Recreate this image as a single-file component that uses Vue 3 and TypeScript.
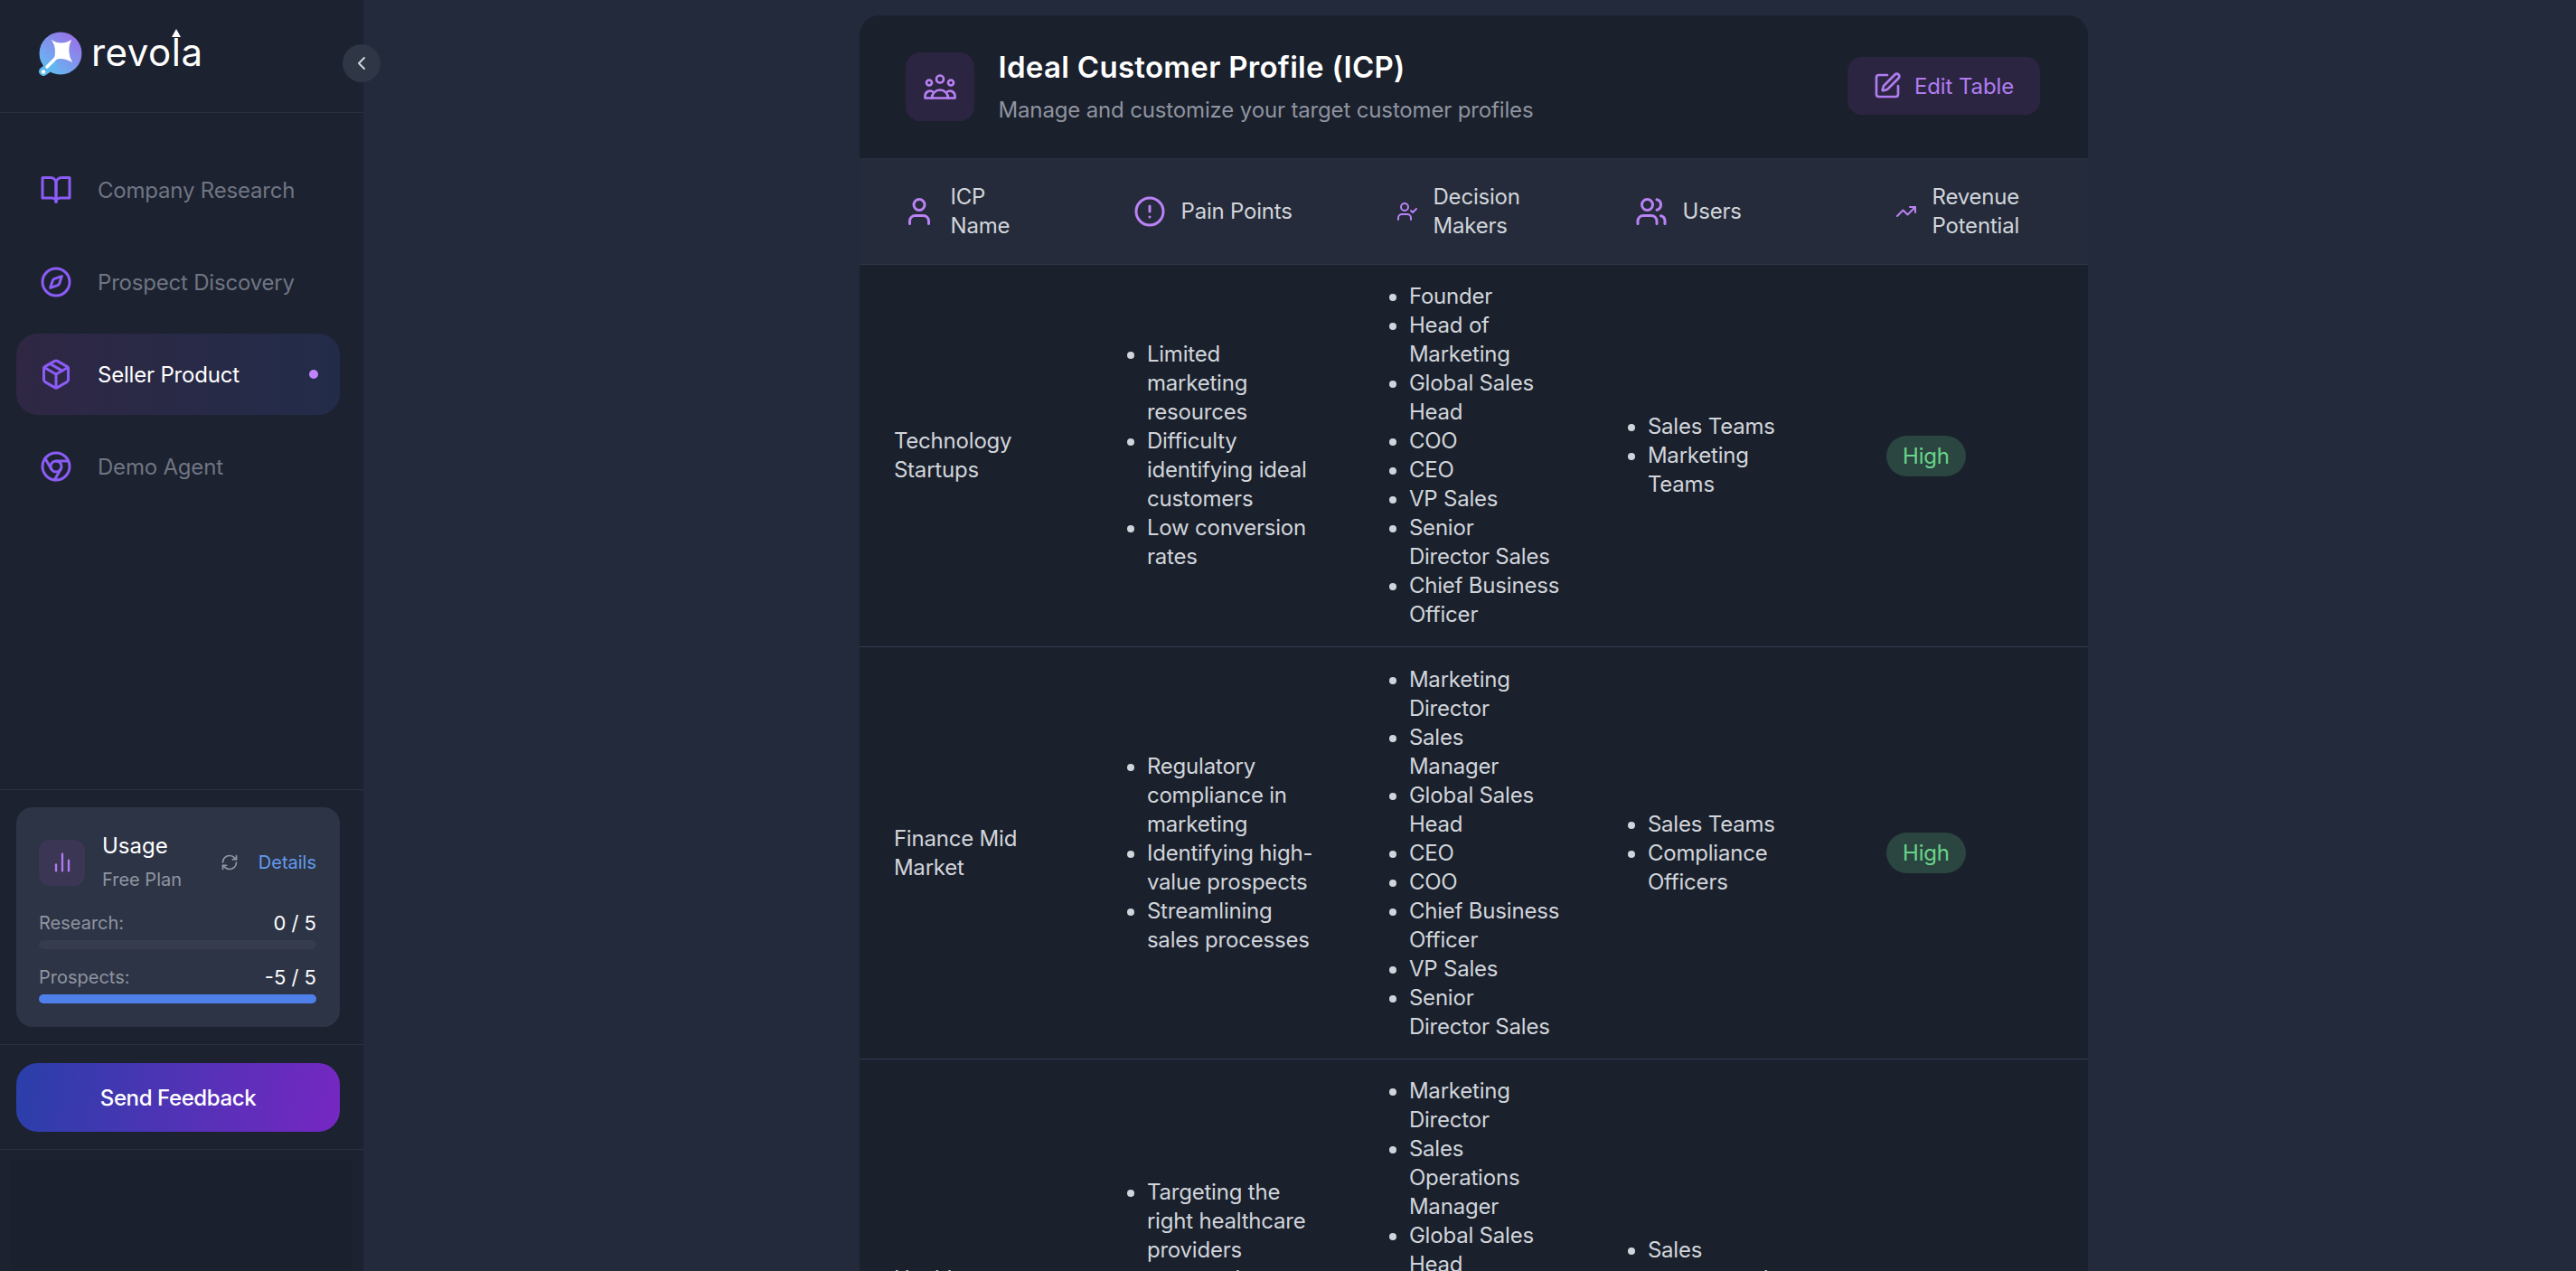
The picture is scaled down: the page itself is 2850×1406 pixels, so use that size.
<template>
  <div class="app">
    <aside class="sidebar">
      <div class="brand">
        <svg class="brand__mark" width="52" height="54" viewBox="0 0 52 54">
          <defs>
            <linearGradient id="bubble" x1="0.85" y1="0.05" x2="0.15" y2="0.95">
              <stop offset="0" stop-color="#9b6fe8" />
              <stop offset="1" stop-color="#62bdf2" />
            </linearGradient>
          </defs>
          <circle cx="27" cy="28" r="23.5" fill="url(#bubble)" />
          <path d="M18 41 8 48" stroke="#5fb9ef" stroke-width="10" stroke-linecap="round" />
          <circle cx="8" cy="48.500" r="2.200" fill="#fff" />
          <path d="M29 26 12 43" stroke="#fff" stroke-width="3.500" stroke-linecap="round" />
          <path d="M17 13Q27 20 39 13Q33 25 40 38Q28 31 19 36Q24 24 17 13Z" fill="#fff" />
        </svg>
        <span class="brand__name">revo<span class="brand__l">l</span>a</span>
      </div>
      <button class="collapse">
        <svg width="24" height="24" viewBox="0 0 24 24" fill="none" stroke="currentColor" stroke-width="2" stroke-linecap="round" stroke-linejoin="round"><path d="m15 18-6-6 6-6" /></svg>
      </button>

      <nav class="nav">
        <a v-for="item in navItems" :key="item.label" class="nav__item" :class="{ 'nav__item--active': item.active }">
          <svg class="nav__icon" viewBox="0 0 24 24" v-html="icons[item.icon]"></svg>
          <span>{{ item.label }}</span>
          <i v-if="item.active" class="nav__dot"></i>
        </a>
      </nav>

      <section class="usage-wrap">
        <div class="usage">
          <div class="usage__head">
            <div class="usage__icon">
              <svg width="28" height="28" viewBox="0 0 24 24" v-html="icons.bars"></svg>
            </div>
            <div class="usage__title">
              <strong>Usage</strong>
              <span>Free Plan</span>
            </div>
            <svg class="usage__refresh" width="20" height="20" viewBox="0 0 24 24" v-html="icons.refresh"></svg>
            <a class="usage__details">Details</a>
          </div>
          <div v-for="row in usage" :key="row.label" class="usage__row">
            <div class="usage__line">
              <span>{{ row.label }}</span>
              <b>{{ row.value }}</b>
            </div>
            <div class="usage__bar">
              <div class="usage__fill" :style="{ width: row.percent + '%' }"></div>
            </div>
          </div>
        </div>
      </section>

      <section class="feedback-wrap">
        <button class="feedback">Send Feedback</button>
      </section>

      <div class="side-foot"><div class="side-foot__box"></div></div>
    </aside>

    <main class="main">
      <div class="card">
        <header class="card__head">
          <div class="card__icon">
            <svg width="36" height="28" viewBox="0 0 36 28" fill="none" stroke="#b982f5" stroke-width="2.600" stroke-linejoin="round" stroke-linecap="round">
              <circle cx="18" cy="5.500" r="4" />
              <circle cx="6" cy="9.500" r="3" />
              <circle cx="30" cy="9.500" r="3" />
              <path d="M9 26.500a9 9 0 0 1 18 0z" />
              <path d="M9 26.500H1.500v-2.500a5.500 5.500 0 0 1 8.500-4.500" />
              <path d="M27 26.500h7.500v-2.500a5.500 5.500 0 0 0-8.500-4.500" />
            </svg>
          </div>
          <div class="card__titles">
            <h1>Ideal Customer Profile (ICP)</h1>
            <p>Manage and customize your target customer profiles</p>
          </div>
          <button class="edit">
            <svg width="32" height="32" viewBox="0 0 24 24" v-html="icons.edit"></svg>
            Edit Table
          </button>
        </header>

        <table class="icp">
          <colgroup>
            <col class="c1" /><col class="c2" /><col class="c3" /><col class="c4" /><col class="c5" />
          </colgroup>
          <thead>
            <tr>
              <th v-for="col in columns" :key="col.label">
                <div class="th">
                  <svg :width="col.size" :height="col.size" viewBox="0 0 24 24" v-html="icons[col.icon]"></svg>
                  <span>{{ col.label }}</span>
                </div>
              </th>
            </tr>
          </thead>
          <tbody>
            <tr v-for="row in rows" :key="row.name">
              <td class="name">{{ row.name }}</td>
              <td><ul><li v-for="p in row.pains" :key="p">{{ p }}</li></ul></td>
              <td><ul><li v-for="d in row.makers" :key="d">{{ d }}</li></ul></td>
              <td><ul><li v-for="u in row.users" :key="u">{{ u }}</li></ul></td>
              <td><span class="badge">{{ row.revenue }}</span></td>
            </tr>
          </tbody>
        </table>
      </div>
    </main>
  </div>
</template>

<script setup lang="ts">
const stroke = 'fill="none" stroke="currentColor" stroke-width="2" stroke-linecap="round" stroke-linejoin="round"'

const icons: Record<string, string> = {
  book: `<g ${stroke}><path d="M2 3h6a4 4 0 0 1 4 4v14a3 3 0 0 0-3-3H2z"/><path d="M22 3h-6a4 4 0 0 0-4 4v14a3 3 0 0 1 3-3h7z"/></g>`,
  compass: `<g ${stroke}><circle cx="12" cy="12" r="10"/><path d="m16.24 7.76-1.804 5.411a2 2 0 0 1-1.265 1.265L7.76 16.24l1.804-5.411a2 2 0 0 1 1.265-1.265z"/></g>`,
  box: `<g ${stroke}><path d="M11 21.73a2 2 0 0 0 2 0l7-4A2 2 0 0 0 21 16V8a2 2 0 0 0-1-1.73l-7-4a2 2 0 0 0-2 0l-7 4A2 2 0 0 0 3 8v8a2 2 0 0 0 1 1.73z"/><path d="M12 22V12"/><path d="M3.3 7 12 12l8.700-5"/><path d="m7.500 4.270 9 5.150"/></g>`,
  chrome: `<g ${stroke}><circle cx="12" cy="12" r="10"/><circle cx="12" cy="12" r="4"/><path d="M21.170 8H12"/><path d="M3.950 6.060 8.540 14"/><path d="M10.880 21.940 15.460 14"/></g>`,
  bars: `<g ${stroke}><path d="M18 20V10"/><path d="M12 20V4"/><path d="M6 20v-6"/></g>`,
  refresh: `<g ${stroke}><path d="M3 12a9 9 0 0 1 9-9 9.750 9.750 0 0 1 6.740 2.740L21 8"/><path d="M21 3v5h-5"/><path d="M21 12a9 9 0 0 1-9 9 9.750 9.750 0 0 1-6.740-2.740L3 16"/><path d="M8 16H3v5"/></g>`,
  edit: `<g ${stroke}><path d="M12 3H5a2 2 0 0 0-2 2v14a2 2 0 0 0 2 2h14a2 2 0 0 0 2-2v-7"/><path d="M18.375 2.625a1 1 0 0 1 3 3l-9.013 9.014a2 2 0 0 1-.853.505l-2.873.84a.5.500 0 0 1-.62-.62l.84-2.873a2 2 0 0 1 .506-.852z"/></g>`,
  user: `<g ${stroke}><path d="M19 21v-2a4 4 0 0 0-4-4H9a4 4 0 0 0-4 4v2"/><circle cx="12" cy="7" r="4"/></g>`,
  alert: `<g ${stroke}><circle cx="12" cy="12" r="10"/><path d="M12 8v4"/><path d="M12 16h.01"/></g>`,
  userCheck: `<g ${stroke}><path d="M16 21v-2a4 4 0 0 0-4-4H6a4 4 0 0 0-4 4v2"/><circle cx="9" cy="7" r="4"/><path d="m16 11 2 2 4-4"/></g>`,
  users: `<g ${stroke}><path d="M16 21v-2a4 4 0 0 0-4-4H6a4 4 0 0 0-4 4v2"/><circle cx="9" cy="7" r="4"/><path d="M22 21v-2a4 4 0 0 0-3-3.870"/><path d="M16 3.130a4 4 0 0 1 0 7.750"/></g>`,
  trend: `<g ${stroke}><path d="M22 7 13.500 15.500 8.500 10.500 2 17"/><path d="M16 7h6v6"/></g>`
}

const navItems = [
  { label: 'Company Research', icon: 'book', active: false },
  { label: 'Prospect Discovery', icon: 'compass', active: false },
  { label: 'Seller Product', icon: 'box', active: true },
  { label: 'Demo Agent', icon: 'chrome', active: false }
]

const usage = [
  { label: 'Research:', value: '0 / 5', percent: 0 },
  { label: 'Prospects:', value: '-5 / 5', percent: 100 }
]

const columns = [
  { label: 'ICP\nName', icon: 'user', size: 36 },
  { label: 'Pain Points', icon: 'alert', size: 36 },
  { label: 'Decision\nMakers', icon: 'userCheck', size: 24 },
  { label: 'Users', icon: 'users', size: 36 },
  { label: 'Revenue\nPotential', icon: 'trend', size: 24 }
]

// line breaks are kept explicit, the stand-in font is narrower than the original
const rows = [
  {
    name: 'Technology\nStartups',
    pains: ['Limited\nmarketing\nresources', 'Difficulty\nidentifying ideal\ncustomers', 'Low conversion\nrates'],
    makers: ['Founder', 'Head of\nMarketing', 'Global Sales\nHead', 'COO', 'CEO', 'VP Sales', 'Senior\nDirector Sales', 'Chief Business\nOfficer'],
    users: ['Sales Teams', 'Marketing\nTeams'],
    revenue: 'High'
  },
  {
    name: 'Finance Mid\nMarket',
    pains: ['Regulatory\ncompliance in\nmarketing', 'Identifying high-\nvalue prospects', 'Streamlining\nsales processes'],
    makers: ['Marketing\nDirector', 'Sales\nManager', 'Global Sales\nHead', 'CEO', 'COO', 'Chief Business\nOfficer', 'VP Sales', 'Senior\nDirector Sales'],
    users: ['Sales Teams', 'Compliance\nOfficers'],
    revenue: 'High'
  },
  {
    name: 'Healthcare\nProviders',
    pains: ['Targeting the\nright healthcare\nproviders\naccurately', 'Compliance with\nhealthcare\nregulations', 'Long cycles'],
    makers: ['Marketing\nDirector', 'Sales\nOperations\nManager', 'Global Sales\nHead', 'CEO', 'COO', 'Chief Business\nOfficer', 'VP Sales', 'Senior\nDirector Sales', 'Founder'],
    users: ['Sales\nrepresentatives', 'Marketing\nManagers'],
    revenue: 'High'
  }
]
</script>

<style>
html,
body {
  margin: 0;
  background: #232a3c;
  overflow: hidden;
}
</style>

<style scoped>
.app {
  display: flex;
  height: 1406px;
  overflow: hidden;
  font-family: Inter, "Noto Sans", sans-serif;
  font-size: 24px;
  color: #d1d5db;
}

.sidebar {
  position: relative;
  flex: 0 0 402px;
  display: flex;
  flex-direction: column;
  background: #1c2230;
}

.brand {
  flex: none;
  height: 125px;
  display: flex;
  align-items: center;
  gap: 9px;
  padding: 0 0 9px 40px;
  box-sizing: border-box;
  border-bottom: 1px solid #2a3042;
}

.brand__mark {
  flex: none;
}

.brand__name {
  font-size: 42px;
  letter-spacing: 0.5px;
  line-height: 50px;
  color: #fff;
}

.brand__l {
  position: relative;
}

.brand__l::after {
  content: "";
  position: absolute;
  left: 0;
  top: 0;
  border-left: 5px solid transparent;
  border-right: 5px solid transparent;
  border-bottom: 9px solid #fff;
}

.collapse {
  position: absolute;
  left: 379px;
  top: 49px;
  width: 42px;
  height: 42px;
  padding: 0;
  border: 0;
  border-radius: 50%;
  background: #2f3645;
  color: #d1d5db;
  display: flex;
  align-items: center;
  justify-content: center;
}

.nav {
  flex: 1;
  display: flex;
  flex-direction: column;
  gap: 12px;
  padding: 40px 26px 0 18px;
}

.nav__item {
  height: 90px;
  flex: none;
  display: flex;
  align-items: center;
  gap: 28px;
  padding: 0 24px 0 26px;
  border-radius: 24px;
  color: #6f7583;
  letter-spacing: -0.2px;
}

.nav__item--active {
  background: linear-gradient(90deg, #2f2744, #222c49);
  color: #fff;
}

.nav__icon {
  width: 36px;
  height: 36px;
  color: #8b5cf6;
  flex: none;
}

.nav__dot {
  width: 10px;
  height: 10px;
  margin-left: auto;
  border-radius: 50%;
  background: #c084fc;
}

.usage-wrap {
  flex: none;
  padding: 19px 26px 19px 18px;
  border-top: 1px solid #2a3042;
}

.usage {
  height: 243px;
  box-sizing: border-box;
  padding: 25px 26px 0 25px;
  border-radius: 18px;
  background: #2d3446;
}

.usage__head {
  height: 72px;
  display: flex;
  align-items: center;
}

.usage__icon {
  width: 51px;
  height: 51px;
  flex: none;
  display: flex;
  align-items: center;
  justify-content: center;
  border-radius: 12px;
  background: #3b3654;
  color: #ae7bf2;
}

.usage__title {
  margin-left: 19px;
  display: flex;
  flex-direction: column;
  gap: 7px;
}

.usage__title strong {
  font-weight: 400;
  font-size: 24px;
  line-height: 30px;
  color: #fff;
}

.usage__title span {
  font-size: 20px;
  line-height: 30px;
  color: #8f94a0;
}

.usage__refresh {
  margin-left: auto;
  color: #9097a3;
}

.usage__details {
  margin-left: 22px;
  font-size: 20px;
  color: #639bec;
}

.usage__row {
  margin-top: 16px;
}

.usage__line {
  display: flex;
  justify-content: space-between;
  height: 30px;
  line-height: 30px;
  font-size: 20px;
  color: #8f94a0;
}

.usage__line b {
  font-weight: 400;
  font-size: 22px;
  color: #fff;
}

.usage__bar {
  height: 10px;
  margin-top: 4px;
  border-radius: 5px;
  background: #363c4d;
  overflow: hidden;
}

.usage__fill {
  height: 100%;
  background: #4f80ea;
}

.feedback-wrap {
  flex: none;
  padding: 20px 26px 19px 18px;
  border-top: 1px solid #2a3042;
}

.feedback {
  display: block;
  width: 100%;
  height: 76px;
  border: 0;
  border-radius: 24px;
  background: linear-gradient(100deg, #2a3fa9, #7627c2);
  color: #fff;
  font: 500 24px Inter, "Noto Sans", sans-serif;
  letter-spacing: -0.4px;
}

.side-foot {
  flex: none;
  height: 135px;
  padding: 11px 13px 0 12px;
  box-sizing: border-box;
  border-top: 1px solid #2a3042;
}

.side-foot__box {
  height: 100%;
  background: #1a202e;
}

.main {
  flex: 1;
  min-width: 0;
  display: flex;
  justify-content: center;
  padding: 17px 0 0 8px;
}

.card {
  width: 1359px;
  height: max-content;
  border-radius: 22px 22px 0 0;
  background: #1a202c;
}

.card__head {
  height: 158px;
  display: flex;
  align-items: center;
  padding: 0 53px 0 51px;
}

.card__icon {
  width: 76px;
  height: 76px;
  flex: none;
  display: flex;
  align-items: center;
  justify-content: center;
  border-radius: 16px;
  background: #2c2542;
}

.card__titles {
  margin-left: 27px;
  padding-bottom: 2px;
}

.card__titles h1 {
  margin: 0;
  font-size: 33px;
  line-height: 44px;
  font-weight: 600;
  letter-spacing: 0.3px;
  color: #fff;
}

.card__titles p {
  margin: 10px 0 0;
  line-height: 32px;
  letter-spacing: -0.15px;
  color: #8f94a0;
}

.edit {
  width: 213px;
  height: 64px;
  margin: 0 0 2px auto;
  padding: 0;
  display: flex;
  align-items: center;
  justify-content: center;
  gap: 14px;
  border: 0;
  border-radius: 16px;
  background: #2c2542;
  color: #b07df0;
  font: 400 24px Inter, "Noto Sans", sans-serif;
  letter-spacing: -0.1px;
}

.icp {
  width: 100%;
  table-layout: fixed;
  border-collapse: collapse;
  line-height: 32px;
  letter-spacing: -0.2px;
}

.c1 { width: 240px; }
.c2 { width: 290px; }
.c3 { width: 264px; }
.c4 { width: 304px; }
.c5 { width: 261px; }

thead tr {
  background: #252b3a;
  border-top: 1px solid #2a3040;
  border-bottom: 1px solid #2f3648;
}

th {
  height: 116px;
  padding: 0;
  font-weight: 400;
  text-align: left;
}

.th {
  display: flex;
  align-items: center;
  gap: 17px;
  white-space: pre-line;
}

.th svg {
  flex: none;
  color: #b982f5;
}

th:nth-child(1) .th { padding-left: 48px; }
th:nth-child(2) .th { padding-left: 63px; }
th:nth-child(3) .th { padding-left: 64px; }
th:nth-child(4) .th { padding-left: 64px; }
th:nth-child(5) .th { padding-left: 48px; }

tbody tr {
  border-bottom: 1px solid #353c55;
}

td {
  padding: 19.2px 0 19.2px 38.4px;
  vertical-align: middle;
  white-space: pre-line;
}

ul {
  margin: 0;
  padding-left: 40px;
}

.badge {
  display: inline-block;
  height: 45px;
  width: 88px;
  line-height: 45px;
  text-align: center;
  border-radius: 23px;
  background: #2b4540;
  color: #68d48a;
}
</style>
